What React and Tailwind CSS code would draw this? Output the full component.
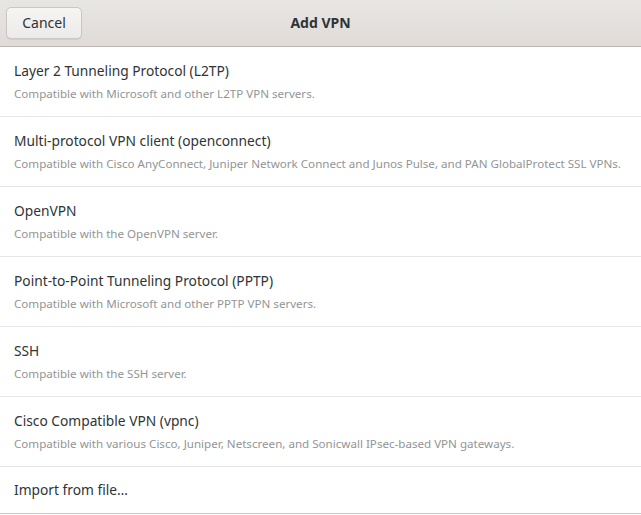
import React from "react";

const vpnTypes = [
  {
    name: "Layer 2 Tunneling Protocol (L2TP)",
    desc: "Compatible with Microsoft and other L2TP VPN servers.",
  },
  {
    name: "Multi-protocol VPN client (openconnect)",
    desc: "Compatible with Cisco AnyConnect, Juniper Network Connect and Junos Pulse, and PAN GlobalProtect SSL VPNs.",
  },
  { name: "OpenVPN", desc: "Compatible with the OpenVPN server." },
  {
    name: "Point-to-Point Tunneling Protocol (PPTP)",
    desc: "Compatible with Microsoft and other PPTP VPN servers.",
  },
  { name: "SSH", desc: "Compatible with the SSH server." },
  {
    name: "Cisco Compatible VPN (vpnc)",
    desc: "Compatible with various Cisco, Juniper, Netscreen, and Sonicwall IPsec-based VPN gateways.",
  },
];

const App = () => {
  return (
    <div className="w-[641px] h-[515px] bg-white overflow-hidden font-['Noto_Sans',sans-serif] text-[#2e3436]">
      {/* Header bar */}
      <div className="h-[47px] bg-gradient-to-b from-[#e8e6e3] to-[#dfdbd8] border-b border-[#bfb8b1] flex items-center relative px-[6px] pb-[1px]">
        <button className="h-[32px] w-[76px] rounded-[5px] border border-[#cdc7c2] bg-gradient-to-b from-[#f6f5f4] to-[#edebe9] shadow-[0_1px_1px_rgba(0,0,0,0.08)] text-[14px] text-[#2e3436]">
          Cancel
        </button>
        <div className="absolute inset-0 flex items-center justify-center pointer-events-none pb-[2px]">
          <span className="text-[14px] font-bold">Add VPN</span>
        </div>
      </div>

      {/* Connection types */}
      <div className="flex flex-col">
        {vpnTypes.map((t) => (
          <div
            key={t.name}
            className="h-[70px] border-b border-[#e6e6e6] px-[14px] flex flex-col justify-center"
          >
            <div className="text-[13.75px] leading-[20px]">{t.name}</div>
            <div className="text-[11.6px] leading-[16px] mt-[5px] text-[#929595]">{t.desc}</div>
          </div>
        ))}
        <div className="h-[47px] border-b border-[#c9c9c4] px-[14px] flex items-center">
          <span className="text-[13.75px]">Import from file…</span>
        </div>
      </div>
    </div>
  );
};

export default App;
